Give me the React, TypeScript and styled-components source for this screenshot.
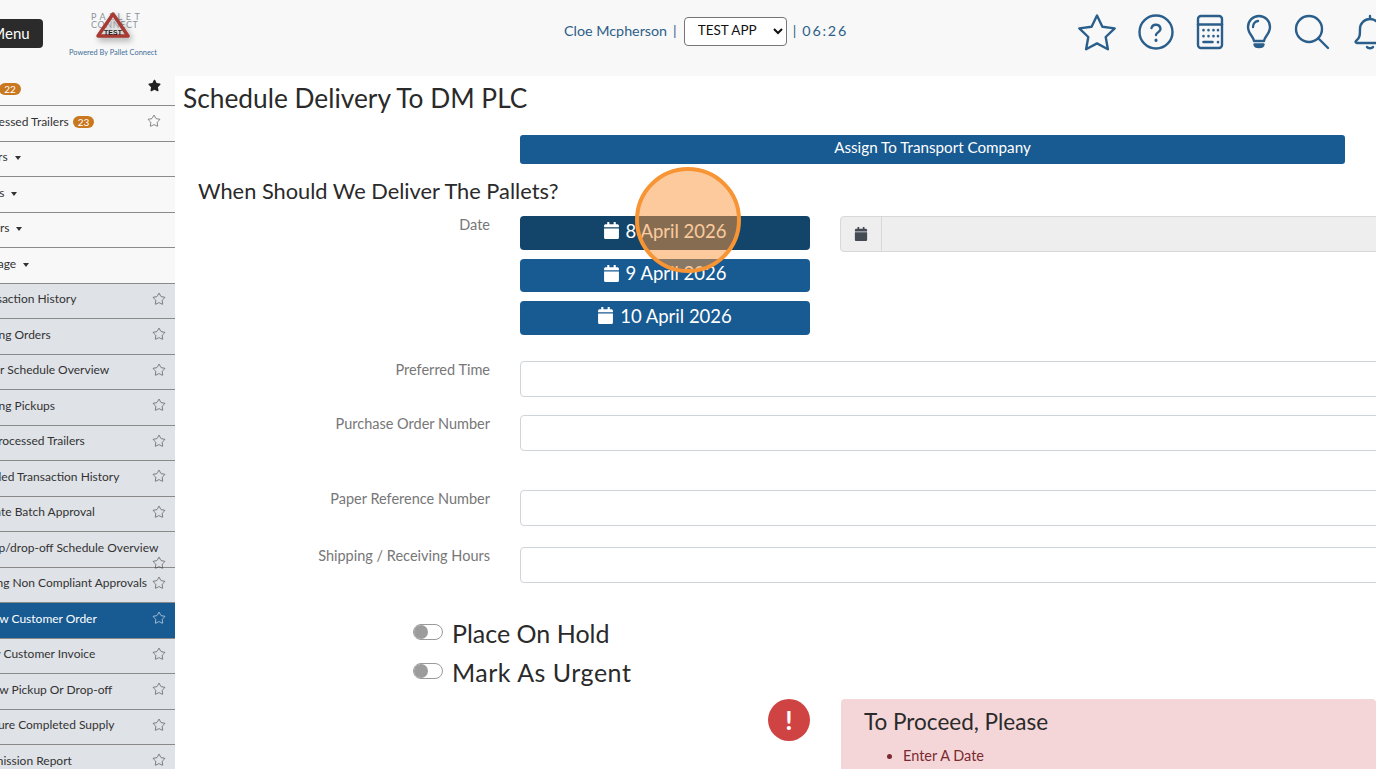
import React from 'react';
import styled, { createGlobalStyle } from 'styled-components';
import { FaCalendar, FaStar } from 'react-icons/fa';
import { Star } from 'lucide-react';

const GlobalStyle = createGlobalStyle`
  html, body {
    margin: 0;
    height: 100%;
    overflow: hidden;
    background: #fff;
    font-family: 'Lato', 'Liberation Sans', sans-serif;
    font-weight: 400;
    color: #212529;
  }
`;

const Page = styled.div`
  position: relative;
  width: 1376px;
  height: 769px;
  overflow: hidden;
`;

const Header = styled.header`
  height: 76px;
  background: #f8f8f8;
  display: grid;
  grid-template-columns: 520px 1fr auto;
  align-items: start;
`;

const Brand = styled.div`
  display: flex;
  height: 76px;
`;

const MenuButton = styled.button`
  margin: 19px 0 0 -22px;
  width: 65px;
  height: 29px;
  padding: 0 0 2px;
  border: 0;
  border-radius: 4px;
  background: #2b2b2b;
  color: #fff;
  font: 400 15px 'Lato', sans-serif;
  text-align: center;
`;

const Logo = styled.div`
  margin: 12px 0 0 25px;
  width: 90px;
  display: flex;
  flex-direction: column;
  align-items: center;
`;

const LogoMark = styled.div`
  position: relative;
  width: 44px;
  height: 36px;
`;

const LogoWord = styled.span`
  position: absolute;
  left: 0;
  right: 0;
  top: ${p => (p.$line === 1 ? 0 : 8)}px;
  text-align: center;
  font-size: 9px;
  line-height: 9px;
  letter-spacing: ${p => (p.$line === 1 ? 3.6 : 0.6)}px;
  color: #8a949c;
`;

const LogoTriangle = styled.svg`
  position: absolute;
  left: 5px;
  top: 0;
  filter: drop-shadow(2px 3px 3px rgba(0, 0, 0, 0.35));
`;

const Powered = styled.div`
  font-size: 7.4px;
  line-height: 9px;
  color: #3f6f98;
  white-space: nowrap;
`;

const UserBar = styled.div`
  margin: 17px 0 0 44px;
  display: flex;
  align-items: center;
  height: 29px;
  gap: 6px;
  color: #2c6088;
  font-size: 14.3px;
  > span { padding-bottom: 3px; }
`;

const Clock = styled.span`
  letter-spacing: 1.8px;
`;

const EnvSelect = styled.select`
  width: 103px;
  height: 29px;
  margin-left: 1px;
  background: #fff;
  border: 1px solid #767676;
  border-radius: 4px;
  padding: 0 4px 3px 9px;
  font: 400 13.5px 'Lato', sans-serif;
  color: #111;
`;

const Tools = styled.div`
  display: flex;
  gap: 22px;
  margin: 14px -12px 0 0;
  color: #2b5f8b;
  svg { overflow: visible; }
`;

const Body = styled.div`
  display: flex;
  height: 693px;
`;

const Sidebar = styled.nav`
  width: 175px;
  flex: none;
  overflow: hidden;
  background: #f8f8f8;
`;

const SideList = styled.div`
  width: 203px;
  margin-left: -28px;
`;

const SideRow = styled.div`
  height: ${p => (p.$first ? 23 : 34.5)}px;
  padding-bottom: ${p => (p.$first ? 6 : 0)}px;
  border-bottom: 1px solid #8a8a8a;
  display: flex;
  align-items: center;
  justify-content: space-between;
  padding-right: ${p => (p.$grey ? 9 : 14)}px;
  font-size: 12px;
  white-space: nowrap;
  background: ${p => (p.$active ? '#185a92' : p.$grey ? '#dfe2e7' : '#f8f8f8')};
  color: ${p => (p.$active ? '#fff' : '#333')};
  svg { flex: none; margin-top: -4px; }
`;

const RowText = styled.span`
  margin: -4px 0 0 ${p => p.$indent || 0}px;
`;

const DroppedStar = styled.span`
  align-self: flex-end;
  line-height: 0;
  margin: 0 0 -3px -20px;
`;

const SideLabel = styled.span`
  display: flex;
  align-items: center;
  gap: 4px;
  margin: ${p => (p.$first ? 2 : -3)}px 0 0 ${p => p.$indent}px;
`;

const Caret = styled.i`
  display: inline-block;
  vertical-align: middle;
  margin-left: 7px;
  border-top: 4px solid #333;
  border-left: 3px solid transparent;
  border-right: 3px solid transparent;
`;

const Badge = styled.b`
  background: #c9781f;
  color: #fff;
  font-size: 10px;
  font-weight: 400;
  line-height: 12px;
  padding: 0 5px;
  border-radius: 7px;
`;

const Main = styled.main`
  flex: 1;
  min-width: 0;
  background: #fff;
  padding-left: 8px;
`;

const Title = styled.h1`
  margin: 4px 0 19px;
  font-size: 26.3px;
  line-height: 36px;
  font-weight: 400;
  color: #2a2a2a;
`;

const FormGrid = styled.div`
  display: grid;
  grid-template-columns: 307px 1fr;
  column-gap: 30px;
`;

const Banner = styled.div`
  grid-column: 2;
  width: 825px;
  height: 29px;
  padding-bottom: 5px;
  box-sizing: border-box;
  border-radius: 3px;
  background: #185a92;
  color: #fff;
  font-size: 15.2px;
  display: flex;
  align-items: center;
  justify-content: center;
`;

const Section = styled.h2`
  margin: 12px 0 10px 15px;
  font-size: 21.8px;
  line-height: 30px;
  font-weight: 400;
  color: #2a2a2a;
`;

const FieldRow = styled.div`
  display: grid;
  grid-template-columns: 307px 1fr;
  column-gap: 30px;
  margin-bottom: ${p => p.$gap}px;
`;

const FieldLabel = styled.label`
  text-align: right;
  font-size: 14.5px;
  line-height: 18px;
  color: #777;
`;

const DateArea = styled.div`
  display: flex;
  gap: 30px;
  align-items: flex-start;
`;

const DateColumn = styled.div`
  width: 290px;
  display: flex;
  flex-direction: column;
  gap: 9px;
`;

const DateButton = styled.button`
  height: ${p => p.$h}px;
  border: 0;
  padding: 0 1px 5px 0;
  border-radius: 4px;
  background: ${p => (p.$picked ? '#134469' : '#185a92')};
  color: #fff;
  font: 400 18.5px 'Lato', sans-serif;
  display: flex;
  align-items: center;
  justify-content: center;
  gap: 6px;
`;

const DateGroup = styled.div`
  width: 600px;
  height: 36px;
  display: flex;
  background: #eee;
  border: 1px solid #d8d8d8;
  border-radius: 4px;
  box-sizing: border-box;
`;

const Addon = styled.span`
  width: 40px;
  display: flex;
  align-items: center;
  justify-content: center;
  color: #444b54;
  border-right: 1px solid #d8d8d8;
`;

const TextBox = styled.input`
  width: 900px;
  height: 36px;
  box-sizing: border-box;
  border: 1px solid #cfd4da;
  border-radius: 4px;
  background: #fff;
`;

const ToggleList = styled.div`
  margin: 31px 0 0 230px;
  display: flex;
  flex-direction: column;
`;

const ToggleRow = styled.div`
  display: flex;
  align-items: center;
  gap: 9px;
  height: 39px;
  font-size: 25px;
  color: #2a2a2a;
`;

const ToggleText = styled.span`
  margin-top: -2px;
  letter-spacing: ${p => p.$spacing || 0}px;
`;

const Toggle = styled.span`
  width: 30px;
  height: 16px;
  box-sizing: border-box;
  border: 1px solid #9a9a9a;
  border-radius: 8px;
  background: #fff;
  margin-top: -3px;
  display: flex;
  align-items: center;
  &::before {
    content: '';
    width: 14px;
    height: 14px;
    border-radius: 50%;
    background: #9c9c9c;
  }
`;

const Warning = styled.div`
  display: flex;
  gap: 31px;
  margin: 7px 0 0 585px;
`;

const WarnDot = styled.div`
  width: 42px;
  height: 42px;
  border-radius: 50%;
  background: #d04343;
  color: #fff;
  font-size: 26px;
  font-weight: 700;
  display: flex;
  align-items: center;
  justify-content: center;
  flex: none;
`;

const Alert = styled.div`
  width: 600px;
  height: 120px;
  box-sizing: border-box;
  background: #f4d6d9;
  border-radius: 4px;
  padding: 7px 23px;
  h3 {
    margin: 0;
    font-size: 22.5px;
    line-height: 32px;
    font-weight: 400;
    color: #2a2a2a;
  }
  ul {
    margin: 8px 0 0;
    padding-left: 39px;
    font-size: 14.5px;
    line-height: 20px;
    color: #7b2a30;
  }
`;

const Spotlight = styled.div`
  position: absolute;
  left: 635px;
  top: 167px;
  width: 106px;
  height: 106px;
  box-sizing: border-box;
  border-radius: 50%;
  border: 4px solid #f79434;
  background: rgba(249, 150, 58, 0.5);
`;

const menus = [
  { label: 'Trailers', indent: -2 },
  { label: 'Pallets', indent: -2 },
  { label: 'Carriers', indent: -4 },
  { label: 'Message', indent: -2 },
];

const items = [
  { label: 'Transaction History', indent: 2 },
  { label: 'Pending Orders', indent: -3 },
  { label: 'Trailer Schedule Overview', indent: 0 },
  { label: 'Pending Pickups', indent: -3 },
  { label: 'Reprocessed Trailers', indent: 6 },
  { label: 'Detailed Transaction History', indent: -2 },
  { label: 'Update Batch Approval', indent: 1 },
  { label: 'Pickup/drop-off Schedule Overview', indent: -2, dropped: true },
  { label: 'Pending Non Compliant Approvals', indent: -5 },
  { label: 'New Customer Order', indent: 12, active: true },
  { label: 'New Customer Invoice', indent: 4 },
  { label: 'New Pickup Or Drop-off', indent: 12 },
  { label: 'Capture Completed Supply', indent: 1 },
  { label: 'Commission Report', indent: -3 },
];

const Icon = styled.svg.attrs({ fill: 'none', stroke: 'currentColor', strokeWidth: 2.4, strokeLinecap: 'round', strokeLinejoin: 'round' })``;

const OutlineStar = () => <Star size={14} strokeWidth={1} />;

const TopIcons = () => (
  <Tools>
    <Icon width="39" height="37" viewBox="0 0 39 37">
      <path d="M20 1.5l5.4 11.2 12.3 1.7-9 8.6 2.2 12.2L20 29.4 9.1 35.2l2.2-12.2-9-8.6 12.3-1.7z" />
    </Icon>
    <Icon width="36" height="36" viewBox="0 0 36 36">
      <circle cx="18" cy="18" r="16.5" />
      <path d="M13.5 14a4.6 4.6 0 0 1 9 1c0 3-4.5 3.6-4.5 6" />
      <path d="M18 26v.4" strokeWidth="3" />
    </Icon>
    <Icon width="28" height="36" viewBox="0 0 28 36">
      <rect x="2" y="2" width="24" height="32" rx="3" />
      <path d="M2 10.5h24" />
      <path d="M7.5 16v.2M12.5 16v.2M17.5 16v.2M22 16v.2M7.5 22v.2M12.5 22v.2M17.5 22v.2M22 22v.2M7.5 28h9M22 28v.2" strokeWidth="2.6" />
    </Icon>
    <Icon width="26" height="36" viewBox="0 0 26 36">
      <path d="M8 27c0-4-6-7-6-14a11 11 0 0 1 22 0c0 7-6 10-6 14z" />
      <path d="M7 13a6 6 0 0 1 5-6" />
      <path d="M8.5 30.5h9c-.7 3.5-8.3 3.5-9 0z" fill="currentColor" />
    </Icon>
    <Icon width="36" height="36" viewBox="0 0 36 36">
      <circle cx="15" cy="15" r="13" />
      <path d="M24.5 24.5L34 34" />
    </Icon>
    <Icon width="36" height="36" viewBox="0 0 36 36">
      <path d="M18 2v2M4 27c4-3 4-6 4-12a10 10 0 0 1 20 0c0 6 0 9 4 12 1 1 0 2-1 2H5c-1 0-2-1-1-2z" />
      <path d="M15 33c1 1.6 5 1.6 6 0" />
    </Icon>
  </Tools>
);

const LogoMarkSvg = () => (
  <LogoTriangle width="34" height="30" viewBox="0 0 34 30">
    <path d="M17 2L32 24H2z" fill="rgba(255,255,255,.3)" stroke="#a83a34" strokeWidth="3.5" strokeLinejoin="round" />
    <text x="17" y="22.5" textAnchor="middle" fontSize="7" fontWeight="700" fontFamily="Liberation Sans" fill="#222">TEST</text>
  </LogoTriangle>
);

export default function App() {
  return (
    <Page>
      <GlobalStyle />
      <Header>
        <Brand>
          <MenuButton>Menu</MenuButton>
          <Logo>
            <LogoMark>
              <LogoWord $line={1}>PALLET</LogoWord>
              <LogoWord $line={2}>CONNECT</LogoWord>
              <LogoMarkSvg />
            </LogoMark>
            <Powered>Powered By Pallet Connect</Powered>
          </Logo>
        </Brand>
        <UserBar>
          <span>Cloe Mcpherson</span>
          <span>|</span>
          <EnvSelect defaultValue="TEST APP">
            <option>TEST APP</option>
          </EnvSelect>
          <span>|</span>
          <Clock>06:26</Clock>
        </UserBar>
        <TopIcons />
      </Header>
      <Body>
        <Sidebar>
          <SideList>
            <SideRow $first>
              <SideLabel $first $indent={-8}>Alerts <Badge>22</Badge></SideLabel>
              <FaStar size={13} color="#222" />
            </SideRow>
            <SideRow>
              <SideLabel $indent={-12}>Unprocessed Trailers <Badge>23</Badge></SideLabel>
              <OutlineStar />
            </SideRow>
            {menus.map(menu => (
              <SideRow key={menu.label}>
                <RowText $indent={menu.indent}>{menu.label}<Caret /></RowText>
              </SideRow>
            ))}
            {items.map(item => (
              <SideRow key={item.label} $grey $active={item.active}>
                <RowText $indent={item.indent}>{item.label}</RowText>
                {item.dropped ? (
                  <DroppedStar><OutlineStar /></DroppedStar>
                ) : (
                  <OutlineStar />
                )}
              </SideRow>
            ))}
          </SideList>
        </Sidebar>
        <Main>
          <Title>Schedule Delivery To DM PLC</Title>
          <FormGrid>
            <Banner>Assign To Transport Company</Banner>
          </FormGrid>
          <Section>When Should We Deliver The Pallets?</Section>
          <FieldRow $gap={26}>
            <FieldLabel>Date</FieldLabel>
            <DateArea>
              <DateColumn>
                <DateButton $picked $h={34}><FaCalendar size={17} />8 April 2026</DateButton>
                <DateButton $h={33}><FaCalendar size={17} />9 April 2026</DateButton>
                <DateButton $h={34}><FaCalendar size={17} />10 April 2026</DateButton>
              </DateColumn>
              <DateGroup>
                <Addon><FaCalendar size={14} /></Addon>
              </DateGroup>
            </DateArea>
          </FieldRow>
          <FieldRow $gap={18}>
            <FieldLabel>Preferred Time</FieldLabel>
            <TextBox />
          </FieldRow>
          <FieldRow $gap={39}>
            <FieldLabel>Purchase Order Number</FieldLabel>
            <TextBox />
          </FieldRow>
          <FieldRow $gap={21}>
            <FieldLabel>Paper Reference Number</FieldLabel>
            <TextBox />
          </FieldRow>
          <FieldRow $gap={0}>
            <FieldLabel>Shipping / Receiving Hours</FieldLabel>
            <TextBox />
          </FieldRow>
          <ToggleList>
            <ToggleRow><Toggle /><ToggleText>Place On Hold</ToggleText></ToggleRow>
            <ToggleRow><Toggle /><ToggleText $spacing={0.5}>Mark As Urgent</ToggleText></ToggleRow>
          </ToggleList>
          <Warning>
            <WarnDot>!</WarnDot>
            <Alert>
              <h3>To Proceed, Please</h3>
              <ul><li>Enter A Date</li></ul>
            </Alert>
          </Warning>
        </Main>
      </Body>
      <Spotlight />
    </Page>
  );
}
